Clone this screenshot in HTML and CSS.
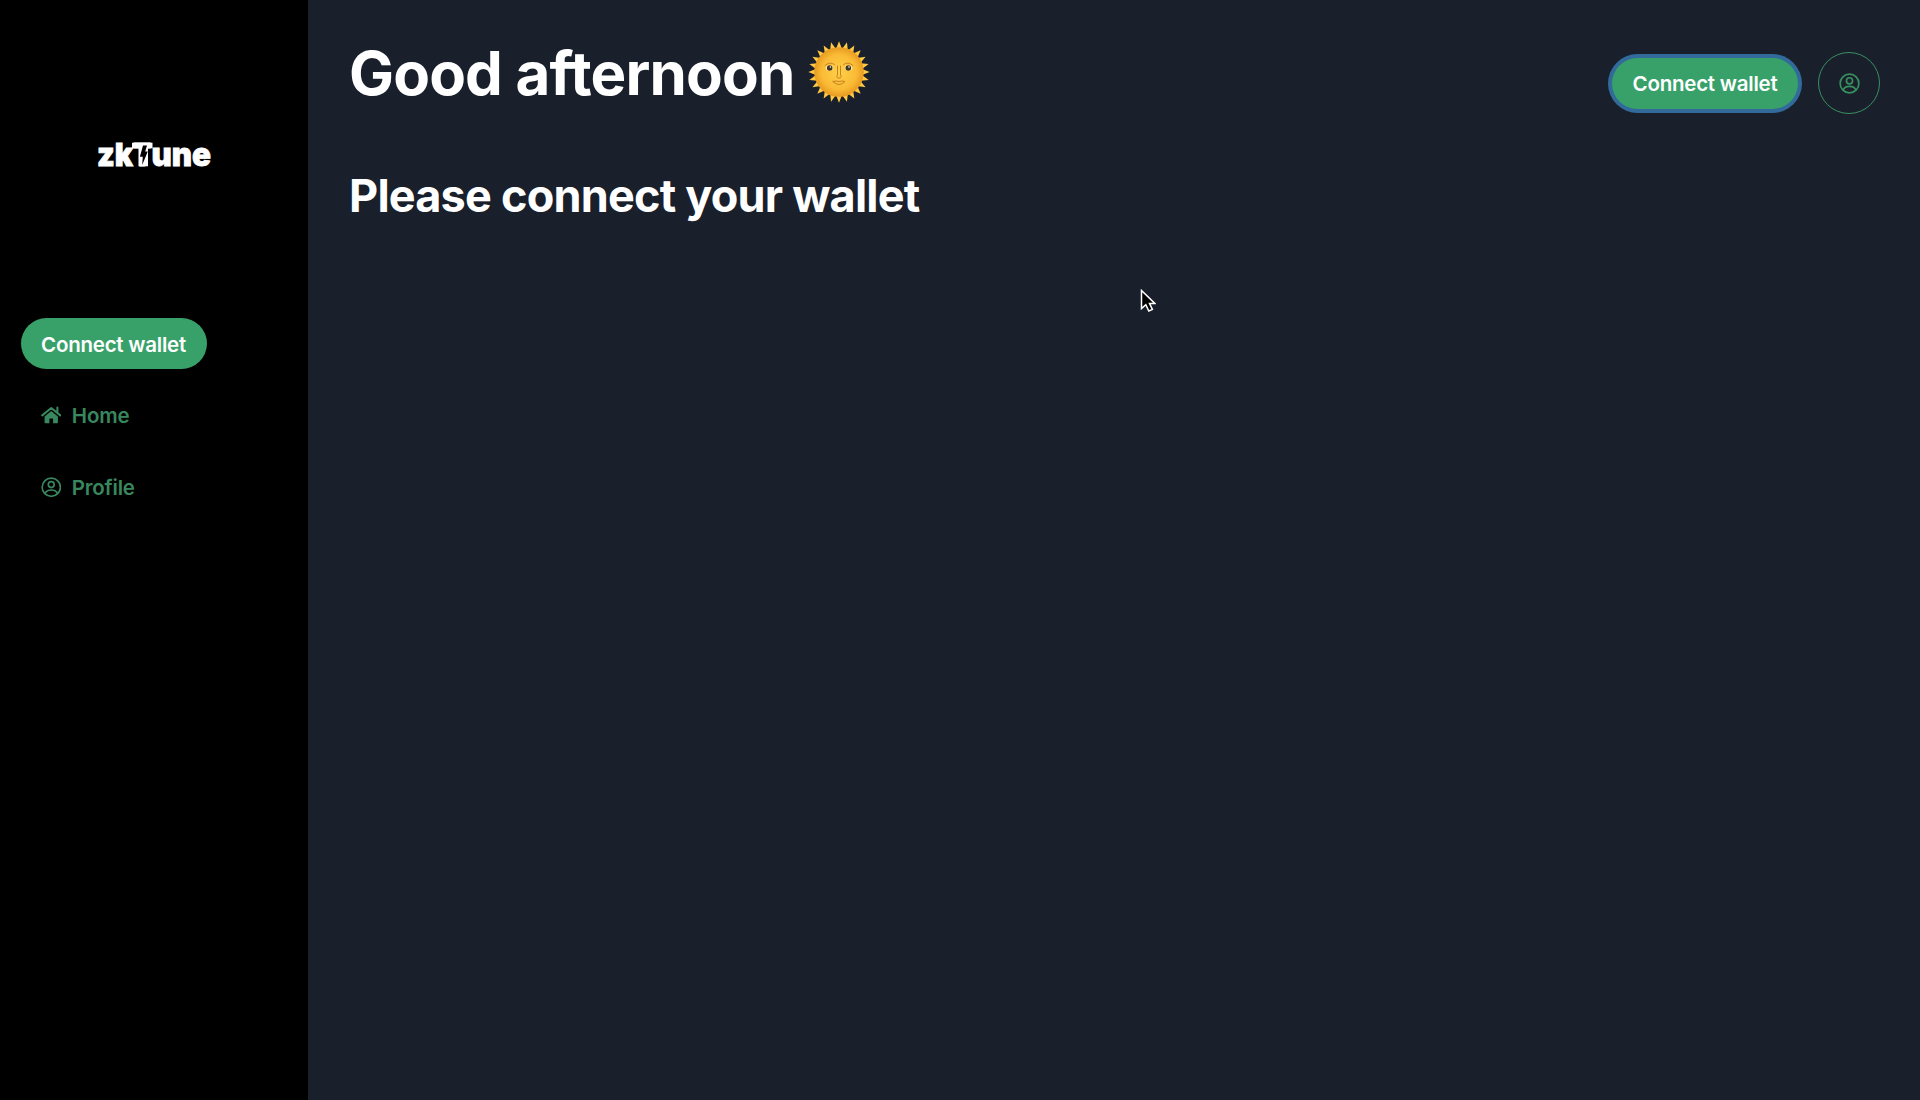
FILE: index.html
```html
<!DOCTYPE html>
<html lang="en">
<head>
<meta charset="utf-8">
<title>zkTune</title>
<link rel="stylesheet" href="styles.css">
</head>
<body>
<svg width="0" height="0" class="defs">
  <symbol id="user" viewBox="0 0 20 20">
    <g fill="none" stroke="currentColor" stroke-width="1.6">
      <circle cx="10" cy="10" r="8.9"/>
      <circle cx="10" cy="7.4" r="2.9"/>
      <path d="M4 16.2c.8-2.400 3-3.500 6-3.500s5.200 1.100 6 3.500"/>
    </g>
  </symbol>
</svg>
<div class="app">
  <aside class="sidebar">
    <svg class="logo" viewBox="0 -8 122 48" width="122" height="48" aria-label="zkTune">
      <g class="logo-text">
        <text x="3" y="28" textLength="36" lengthAdjust="spacingAndGlyphs">zk</text>
        <text x="39.200" y="28" textLength="18" lengthAdjust="spacingAndGlyphs">T</text>
        <text x="57.400" y="28" textLength="59.500" lengthAdjust="spacingAndGlyphs">une</text>
      </g>
      <path d="M38 4.800h20.500v5.500H54v18h-9.500V10.300H38z" fill="#fff"/>
      <path class="bolt" d="M49 7.500h4l-1.800 6h2.600l-5.600 13.500.6-8.300h-2.900z"/>
    </svg>
    <nav class="nav">
      <button class="btn">Connect wallet</button>
      <a class="link">
        <svg class="icon" viewBox="0 0 20 20"><path d="M1.200 10.100 10 2.900l8.800 7.200M16 2.500v4.500" fill="none" stroke="currentColor" stroke-width="2" stroke-linecap="round" stroke-linejoin="round"/><path d="M10 5.800 3.500 11.100V17q0 .700.700.700h4v-4q0-.500.500-.500h2.600q.500 0 .5.500v4h4q.7 0 .7-.7v-5.900z" fill="currentColor"/></svg>
        <span>Home</span>
      </a>
      <a class="link">
        <svg class="icon"><use href="#user"/></svg>
        <span>Profile</span>
      </a>
    </nav>
  </aside>
  <main class="main">
    <header class="header">
      <h1 class="title"><span>Good afternoon</span>
        <svg class="sun" viewBox="-31 -31 62 62">
          <defs>
            <radialGradient id="face"><stop offset="0" stop-color="#ffd04a"/><stop offset=".7" stop-color="#fabb35"/><stop offset="1" stop-color="#e89a20"/></radialGradient>
            <path id="ray" d="M-3-23 0-30.700 3-23z"/>
            <g id="quarter"><use href="#ray"/><use href="#ray" transform="rotate(15)"/><use href="#ray" transform="rotate(30)"/><use href="#ray" transform="rotate(45)"/><use href="#ray" transform="rotate(60)"/><use href="#ray" transform="rotate(75)"/></g>
          </defs>
          <g fill="#ffc845"><use href="#quarter"/><use href="#quarter" transform="rotate(90)"/><use href="#quarter" transform="rotate(180)"/><use href="#quarter" transform="rotate(270)"/></g>
          <circle r="24.800" fill="url(#face)"/>
          <g fill="none" stroke="#c98222" stroke-width="1" stroke-linecap="round">
            <path d="M-14-6.500q5-4.500 9.500-1M4.500-7.500q4.500-3.500 9.500 1M-1.500-6v9q-2 3 1.500 3t1.500-3v-9"/>
            <path d="M-6 9.500q3-1 6 0 3-1 6 0-3 3-6 3t-6-3"/>
          </g>
          <g fill="#fff1bd"><ellipse cx="-9.500" cy="-4" rx="3.800" ry="2.800"/><ellipse cx="9.500" cy="-4" rx="3.800" ry="2.800"/></g>
          <g fill="#43341f"><circle cx="-9.300" cy="-4" r="2.800"/><circle cx="9.300" cy="-4" r="2.800"/></g>
          <g fill="#fff"><circle cx="-8.600" cy="-5" r=".8"/><circle cx="10" cy="-5" r=".8"/></g>
        </svg>
      </h1>
      <div class="actions">
        <button class="btn focused">Connect wallet</button>
        <button class="avatar" aria-label="Profile"><svg><use href="#user"/></svg></button>
      </div>
    </header>
    <h2 class="prompt">Please connect your wallet</h2>
  </main>
</div>
<svg class="cursor" viewBox="0 0 16 24"><path d="M1.500 1.500v18l4.300-3.800 3 6.300 3.600-1.600-2.900-6h5.300z" fill="#000" stroke="#fff" stroke-width="1.500"/></svg>
</body>
</html>
```
FILE: styles.css
```css
* { box-sizing: border-box; }
body { margin: 0; background: #19202b; color: #fff; font-family: Inter, "Liberation Sans", sans-serif; }
.defs { position: absolute; }
.app { display: flex; height: 1100px; overflow: hidden; }
.sidebar { width: 308px; background: #000; display: flex; flex-direction: column; flex-shrink: 0; }
.logo { margin: 130px 0 0 94px; overflow: visible; }
.logo-text { font: 900 32px Inter, sans-serif; fill: #fff; stroke: #fff; stroke-width: .8; }
.bolt { fill: #000; }
.nav { display: flex; flex-direction: column; align-items: flex-start; gap: 20.5px; padding: 140px 20.5px 0; }
.btn { width: 186px; height: 51px; padding: 1px 0 0; border: 0; border-radius: 26px; background: #38a169; color: #fff; font: 600 20.5px Inter, sans-serif; letter-spacing: -.23px; white-space: nowrap; }
.link { display: flex; align-items: center; gap: 10.5px; height: 51.5px; padding: 0 20.3px; color: #38875f; font-size: 20.5px; font-weight: 600; letter-spacing: -.2px; }
.icon { width: 20.5px; height: 20.5px; }
.main { flex: 1; padding: 41px 40px 0 41px; }
.header { display: flex; justify-content: space-between; height: 84px; }
.title { display: flex; align-items: center; gap: 14px; height: 62px; margin: 0; font-size: 60px; font-weight: 700; line-height: 62px; letter-spacing: -.85px; white-space: nowrap; }
.title span { padding-top: 2px; }
.sun { width: 62px; height: 62px; }
.actions { display: flex; align-items: center; height: 84px; gap: 20px; }
.focused { box-shadow: 0 0 0 4px #326a9b; }
.avatar { display: grid; place-items: center; width: 62px; height: 62px; padding: 0; border: 1.3px solid #38905f; border-radius: 50%; background: none; color: #38905f; }
.avatar svg { width: 21px; height: 21px; }
.prompt { margin: 43px 0 0; font-size: 45px; font-weight: 700; line-height: 56px; letter-spacing: -.78px; white-space: nowrap; }
.cursor { position: absolute; left: 1140px; top: 289px; width: 16px; height: 24px; }
```
